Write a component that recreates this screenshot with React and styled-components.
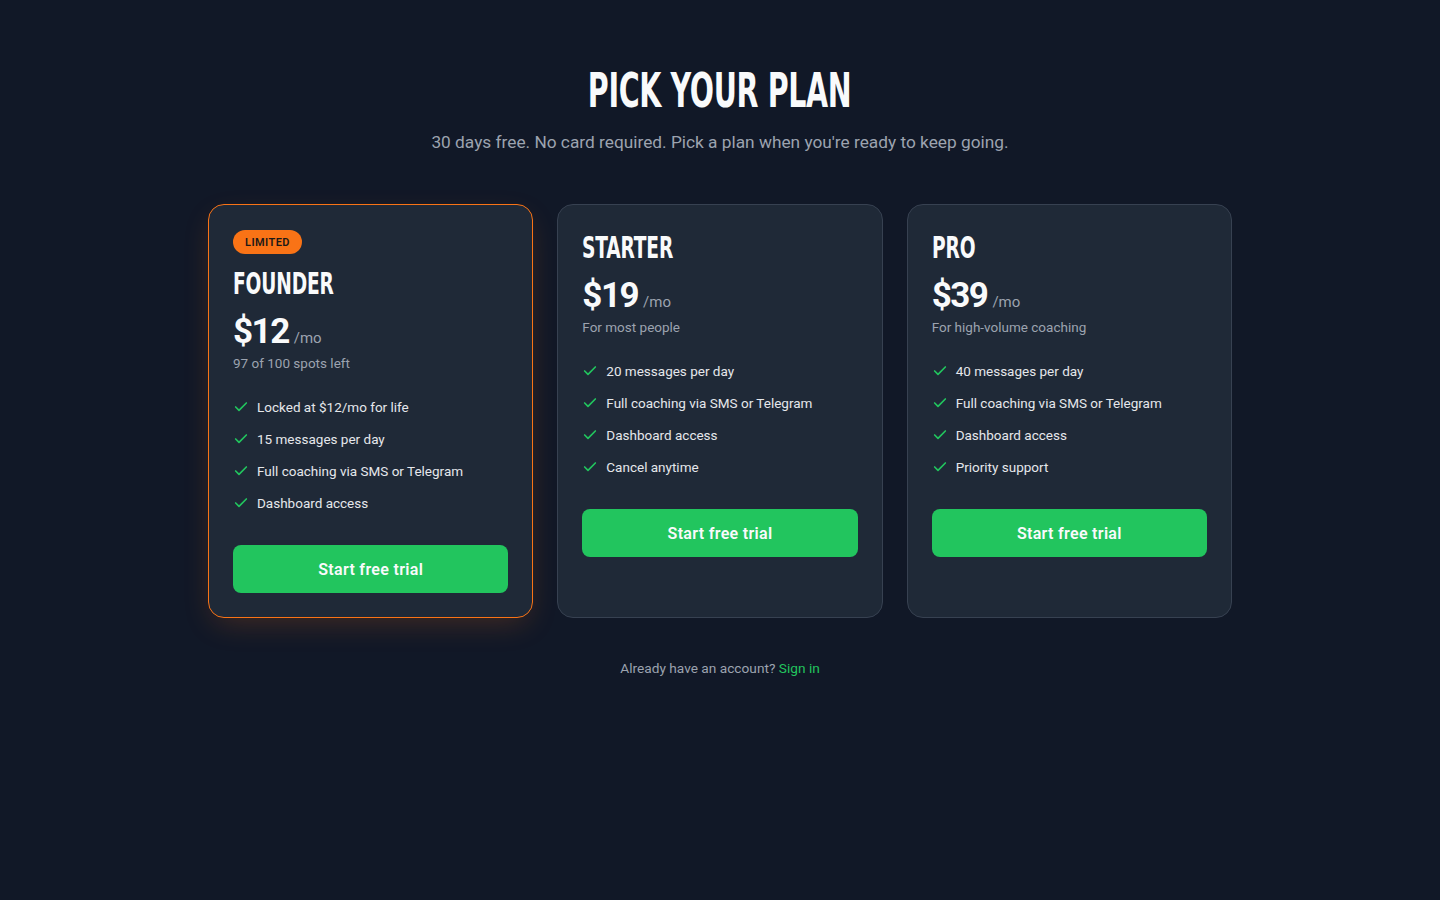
import styled, { createGlobalStyle } from "styled-components";
import { Check } from "lucide-react";

const GlobalStyle = createGlobalStyle`
  html, body {
    margin: 0;
    padding: 0;
    background: #111827;
  }
  body {
    font-family: "Roboto", "Inter", sans-serif;
    color: #f9fafb;
    -webkit-font-smoothing: antialiased;
  }
  * { box-sizing: border-box; }
`;

const Page = styled.main`
  min-height: 100vh;
  padding: 66px 24px 64px;
  display: flex;
  flex-direction: column;
  align-items: center;
`;

// no condensed face is installed, so the display font is squeezed horizontally
const Heading = styled.h1`
  margin: 0;
  font-family: "DejaVu Sans Condensed", "DejaVu Sans", sans-serif;
  font-stretch: condensed;
  font-weight: 700;
  font-size: 48px;
  line-height: 48px;
  letter-spacing: -0.5px;
  color: #f9fafb;
  text-transform: uppercase;
  transform: scaleX(0.66);
`;

const Lead = styled.p`
  margin: 14px 0 0;
  font-size: 17.3px;
  line-height: 28px;
  color: #9ca3af;
`;

const Grid = styled.section`
  margin-top: 48px;
  width: 1024px;
  display: grid;
  grid-template-columns: repeat(3, 1fr);
  gap: 24px;
`;

const Card = styled.article`
  background: #1f2937;
  border: 1px solid ${(p) => (p.$featured ? "#f97316" : "#374151")};
  border-radius: 16px;
  padding: 24px;
  display: flex;
  flex-direction: column;
  box-shadow: ${(p) =>
    p.$featured ? "0 10px 30px -6px rgba(249, 115, 22, 0.22)" : "none"};
`;

const Badge = styled.span`
  align-self: flex-start;
  height: 24px;
  padding: 0 12px;
  margin: 1px 0 11px;
  border-radius: 999px;
  background: #f97316;
  color: #1c1917;
  font-size: 11px;
  font-weight: 600;
  letter-spacing: 0.04em;
  text-transform: uppercase;
  display: inline-flex;
  align-items: center;
`;

const PlanName = styled.h2`
  margin: 0;
  padding-top: 2px;
  font-family: "DejaVu Sans Condensed", "DejaVu Sans", sans-serif;
  font-stretch: condensed;
  font-weight: 700;
  font-size: 30px;
  line-height: 34px;
  letter-spacing: -0.2px;
  text-transform: uppercase;
  color: #f9fafb;
  transform: scaleX(0.69);
  transform-origin: left center;
`;

const PriceRow = styled.div`
  margin-top: 11px;
  display: flex;
  align-items: baseline;
  gap: 5px;
`;

const Amount = styled.span`
  font-size: 35px;
  line-height: 40px;
  font-weight: 700;
  letter-spacing: -1.5px;
  color: #f9fafb;
`;

const Period = styled.span`
  font-size: 15px;
  color: #9ca3af;
`;

const Note = styled.p`
  margin: 1px 0 0;
  font-size: 13.5px;
  line-height: 20px;
  color: #9ca3af;
`;

const Features = styled.ul`
  list-style: none;
  margin: 24px 0 0;
  padding: 0;
  display: flex;
  flex-direction: column;
  gap: 12px;
`;

const Feature = styled.li`
  display: flex;
  align-items: center;
  gap: 8px;
  font-size: 13.5px;
  line-height: 20px;
  color: #e5e7eb;

  svg {
    flex-shrink: 0;
    color: #22c55e;
  }
`;

const Button = styled.button`
  margin-top: 32px;
  height: 48px;
  width: 100%;
  border: none;
  border-radius: 8px;
  background: #22c55e;
  color: #f9fafb;
  font-family: inherit;
  font-size: 16px;
  font-weight: 600;
  letter-spacing: 0.02em;
  cursor: pointer;
`;

const Footer = styled.p`
  margin: 40px 0 0;
  font-size: 13.7px;
  line-height: 20px;
  color: #9ca3af;

  a {
    color: #22c55e;
    text-decoration: none;
  }
`;

const plans = [
  {
    name: "Founder",
    price: "$12",
    note: "97 of 100 spots left",
    badge: "Limited",
    featured: true,
    features: [
      "Locked at $12/mo for life",
      "15 messages per day",
      "Full coaching via SMS or Telegram",
      "Dashboard access",
    ],
  },
  {
    name: "Starter",
    price: "$19",
    note: "For most people",
    features: [
      "20 messages per day",
      "Full coaching via SMS or Telegram",
      "Dashboard access",
      "Cancel anytime",
    ],
  },
  {
    name: "Pro",
    price: "$39",
    note: "For high-volume coaching",
    features: [
      "40 messages per day",
      "Full coaching via SMS or Telegram",
      "Dashboard access",
      "Priority support",
    ],
  },
];

export default function App() {
  return (
    <>
      <GlobalStyle />
      <Page>
        <Heading>Pick your plan</Heading>
        <Lead>
          30 days free. No card required. Pick a plan when you're ready to keep
          going.
        </Lead>

        <Grid>
          {plans.map((plan) => (
            <Card key={plan.name} $featured={plan.featured}>
              {plan.badge && <Badge>{plan.badge}</Badge>}
              <PlanName>{plan.name}</PlanName>
              <PriceRow>
                <Amount>{plan.price}</Amount>
                <Period>/mo</Period>
              </PriceRow>
              <Note>{plan.note}</Note>
              <Features>
                {plan.features.map((f) => (
                  <Feature key={f}>
                    <Check size={16} strokeWidth={2.5} />
                    {f}
                  </Feature>
                ))}
              </Features>
              <Button>Start free trial</Button>
            </Card>
          ))}
        </Grid>

        <Footer>
          Already have an account? <a href="#">Sign in</a>
        </Footer>
      </Page>
    </>
  );
}
